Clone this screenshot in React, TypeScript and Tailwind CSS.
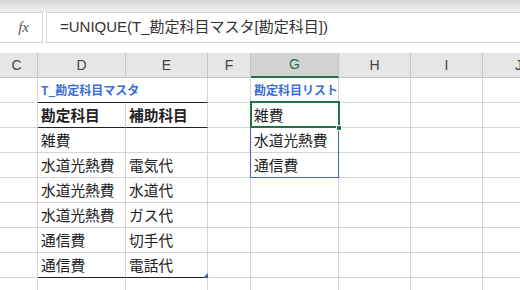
import React from 'react'

const cols = 'grid grid-cols-[38px_88px_82px_43px_88px_72px_72px_72px]'
const cell = 'h-[25px] flex items-center px-[3px] border-r border-b border-[#d4d4d4] whitespace-nowrap overflow-visible'
const jp = { fontFamily: '"Noto Sans CJK JP", "Liberation Sans", sans-serif' }

const rows: [string, string, string][] = [
  ['雑費', '', '水道光熱費'],
  ['水道光熱費', '電気代', '通信費'],
  ['水道光熱費', '水道代', ''],
  ['水道光熱費', 'ガス代', ''],
  ['通信費', '切手代', ''],
  ['通信費', '電話代', ''],
]

export default function App() {
  const headers = ['C', 'D', 'E', 'F', 'G', 'H', 'I', 'J']

  return (
    <div className="w-[520px] h-[290px] overflow-hidden bg-white text-[#222]" style={jp}>
      {/* Formula bar */}
      <div className="h-[12px] bg-gradient-to-b from-[#d6d6d6] to-[#efefef]" />
      <div className="flex h-[31px] gap-[3px]">
        <div className="w-[43px] shrink-0 border border-l-0 border-[#d5d5d5] flex items-center justify-end pr-[13px]">
          <span className="text-[15px] italic text-[#555]" style={{ fontFamily: '"Liberation Serif", serif' }}>fx</span>
        </div>
        <div className="flex-1 border border-r-0 border-[#d5d5d5] flex items-center pl-[13px] text-[15px] text-[#333]" style={{ fontFamily: '"Liberation Sans", "Noto Sans CJK JP", sans-serif' }}>
          =UNIQUE(T_勘定科目マスタ[勘定科目])
        </div>
      </div>
      <div className="h-[10px]" />

      {/* Column headers */}
      <div className={cols + ' h-[25px] bg-[#e6e6e6]'} style={{ fontFamily: '"Liberation Sans", sans-serif' }}>
        {headers.map(h => (
          <div
            key={h}
            className={
              h === 'G'
                ? 'flex items-center justify-center text-[14px] text-[#217346] bg-[#d2d2d2] border-r border-[#c4c4c4] border-b-2 border-b-[#217346]'
                : 'flex items-center justify-center text-[14px] text-[#444] border-r border-b border-[#c4c4c4] ' + (h === 'C' ? 'pr-[4px]' : '')
            }
          >
            {h}
          </div>
        ))}
      </div>

      {/* Sheet */}
      <div className="relative">
        <div className={cols}>
          <div className={cell} />
          <div className={cell + ' col-span-2 border-b-[#222] text-[12px] font-bold text-[#3b6fd6]'}>T_勘定科目マスタ</div>
          <div className={cell} />
          <div className={cell + ' text-[12px] font-bold text-[#3b6fd6]'}>勘定科目リスト</div>
          <div className={cell} />
          <div className={cell} />
          <div className={cell} />
        </div>
        <div className={cols}>
          <div className={cell} />
          <div className={cell + ' border-b-[#222] text-[14.7px] font-bold'}>勘定科目</div>
          <div className={cell + ' border-b-[#222] text-[14.7px] font-bold'}>補助科目</div>
          <div className={cell} />
          <div className={cell + ' text-[14.7px]'}>雑費</div>
          <div className={cell} />
          <div className={cell} />
          <div className={cell} />
        </div>
        {rows.map((r, i) => (
          <div key={i} className={cols}>
            <div className={cell} />
            <div className={cell + ' text-[14.7px]' + (i === rows.length - 1 ? ' border-b-[#222]' : '')}>{r[0]}</div>
            <div className={cell + ' relative text-[14.7px]' + (i === rows.length - 1 ? ' border-b-[#222]' : '')}>
              {r[1]}
              {i === rows.length - 1 && (
                <div className="absolute right-[-1px] bottom-[-1px] w-0 h-0 border-l-[5px] border-l-transparent border-b-[5px] border-b-[#4a5aa8]" />
              )}
            </div>
            <div className={cell} />
            <div className={cell + ' text-[14.7px]'}>{r[2]}</div>
            <div className={cell} />
            <div className={cell} />
            <div className={cell} />
          </div>
        ))}
        <div className={cols}>
          {headers.map(h => <div key={h} className={cell} />)}
        </div>

        {/* spill range + active cell */}
        <div className="absolute left-[250px] top-[24px] w-[89px] h-[76px] border border-[#3f62b0] pointer-events-none" />
        <div className="absolute left-[250px] top-[23px] w-[90px] h-[27px] border-2 border-[#217346] pointer-events-none" />
        <div className="absolute left-[336px] top-[47px] w-[6px] h-[6px] bg-[#217346] border border-white pointer-events-none" />
      </div>
    </div>
  )
}
